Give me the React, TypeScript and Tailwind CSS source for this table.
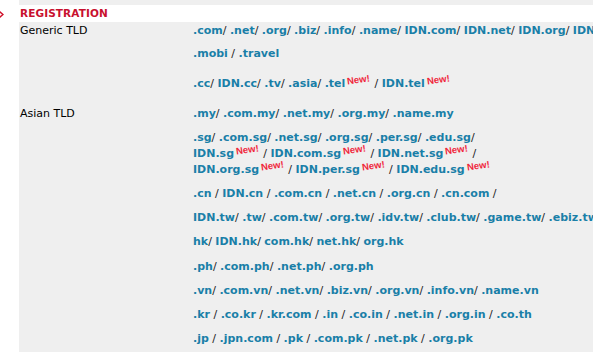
import React from "react";

const New = () => (
  <span className="relative -top-[4px] inline-block ml-[2px] mr-[1px] text-[9.5px] font-bold text-[#f0263a] -rotate-[8deg] [font-family:'Liberation_Sans',sans-serif] leading-none">
    New!
  </span>
);

type Item = { t: string; n?: boolean; s?: string };

const Line = ({ items, className = "" }: { items: Item[]; className?: string }) => (
  <div className={"whitespace-nowrap leading-[16px] " + className}>
    {items.map((it, i) => (
      <React.Fragment key={i}>
        {it.t ? <span className="text-[#1a7fa8] font-bold">{it.t}</span> : null}
        {it.n ? <New /> : null}
        {it.s !== undefined ? <span className="text-[#222] font-normal">{it.s}</span> : null}
      </React.Fragment>
    ))}
  </div>
);

const mk = (str: string, sep: string, trailing?: string): Item[] => {
  const parts = str.split("|");
  return parts.map((p, i) => {
    const n = p.endsWith("*");
    const t = n ? p.slice(0, -1) : p;
    return { t, n, s: i < parts.length - 1 ? sep : trailing };
  });
};

export default function App() {
  return (
    <div className="w-[593px] h-[352px] overflow-hidden bg-white flex [font-family:'DejaVu_Sans',sans-serif] text-[11px]">
      <div className="w-[19px] shrink-0 relative">
        <svg className="absolute left-0 top-[11px]" width="4" height="7" viewBox="0 0 4 7">
          <path d="M0 0 L4 3.5 L0 7 L0 5 L2 3.5 L0 2 Z" fill="#d0102a" />
        </svg>
      </div>
      <div className="flex-1 flex flex-col bg-[#efefef] min-w-0">
        <div className="h-[5px]" />
        <div className="h-[17px] bg-white pl-[1px] flex items-center">
          <span className="text-[#c8102e] font-bold text-[10.5px] tracking-[0.1px]">REGISTRATION</span>
        </div>
        <div className="flex-1 pl-[1px] pt-[1px] overflow-hidden">
          <div className="grid grid-cols-[173px_1fr]">
            <div className="text-[11px] leading-[16px] text-black">Generic TLD</div>
            <div className="flex flex-col overflow-hidden">
              <Line items={mk(".com|.net|.org|.biz|.info|.name|IDN.com|IDN.net|IDN.org|IDN.biz|IDN.info", "/ ")} />
              <Line className="mt-[7px]" items={mk(".mobi|.travel", " / ")} />
              <Line className="mt-[14px]" items={[
                { t: ".cc", s: "/ " },
                { t: "IDN.cc", s: "/ " },
                { t: ".tv", s: "/ " },
                { t: ".asia", s: "/ " },
                { t: ".tel", n: true, s: " / " },
                { t: "IDN.tel", n: true },
              ]} />
            </div>
          </div>
          <div className="grid grid-cols-[173px_1fr] mt-[14px]">
            <div className="text-[11px] leading-[16px] text-black">Asian TLD</div>
            <div className="flex flex-col overflow-hidden">
              <Line items={mk(".my|.com.my|.net.my|.org.my|.name.my", "/ ")} />
              <div className="mt-[8px]">
                <Line className="leading-[16.5px]" items={mk(".sg|.com.sg|.net.sg|.org.sg|.per.sg|.edu.sg", "/ ", "/")} />
                <Line className="leading-[16.5px]" items={[
                  { t: "IDN.sg", n: true, s: " / " },
                  { t: "IDN.com.sg", n: true, s: " / " },
                  { t: "IDN.net.sg", n: true, s: " /" },
                ]} />
                <Line className="leading-[16.5px]" items={[
                  { t: "IDN.org.sg", n: true, s: " / " },
                  { t: "IDN.per.sg", n: true, s: " / " },
                  { t: "IDN.edu.sg", n: true },
                ]} />
              </div>
              <Line className="mt-[8px]" items={mk(".cn|IDN.cn|.com.cn|.net.cn|.org.cn|.cn.com", " / ", " /")} />
              <Line className="mt-[8px]" items={mk("IDN.tw|.tw|.com.tw|.org.tw|.idv.tw|.club.tw|.game.tw|.ebiz.tw", "/ ")} />
              <Line className="mt-[8px]" items={mk("hk|IDN.hk|com.hk|net.hk|org.hk", "/ ")} />
              <Line className="mt-[9px]" items={mk(".ph|.com.ph|.net.ph|.org.ph", "/ ")} />
              <Line className="mt-[8px]" items={mk(".vn|.com.vn|.net.vn|.biz.vn|.org.vn|.info.vn|.name.vn", "/ ")} />
              <Line className="mt-[8px]" items={mk(".kr|.co.kr|.kr.com|.in|.co.in|.net.in|.org.in|.co.th", " / ")} />
              <Line className="mt-[8px]" items={mk(".jp|.jpn.com|.pk|.com.pk|.net.pk|.org.pk", " / ")} />
            </div>
          </div>
        </div>
      </div>
    </div>
  );
}
